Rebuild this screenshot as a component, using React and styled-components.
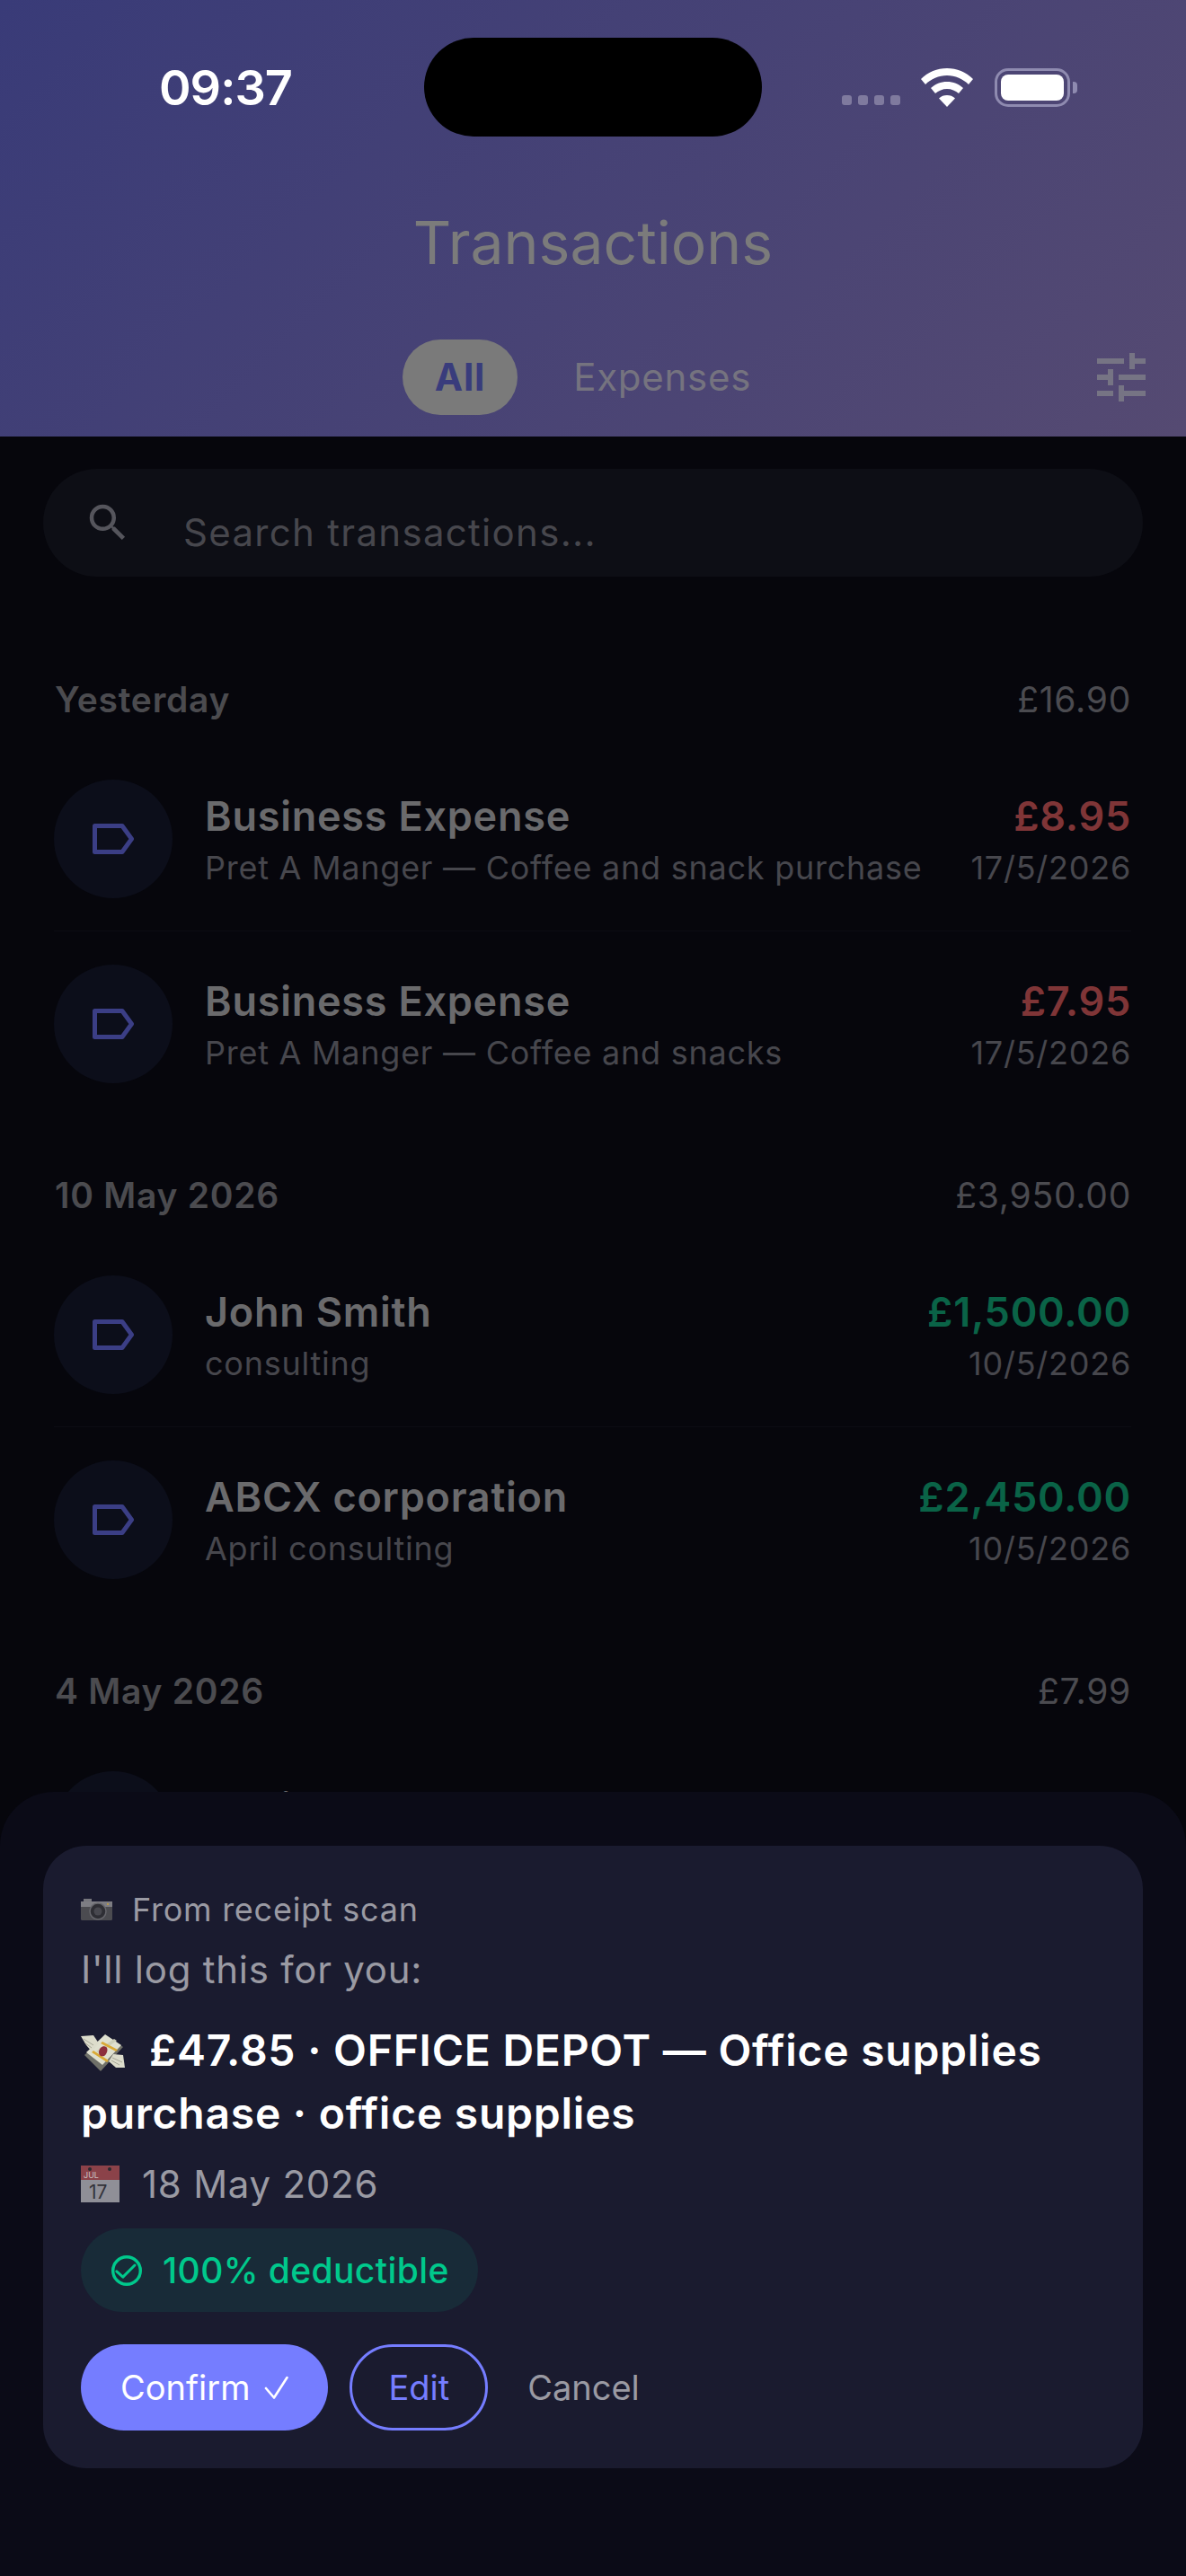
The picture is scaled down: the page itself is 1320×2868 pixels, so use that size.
import React from "react";
import styled, { createGlobalStyle } from "styled-components";
import { MdSearch, MdTune } from "react-icons/md";

const GlobalStyle = createGlobalStyle`
  html, body {
    margin: 0;
    padding: 0;
    background: #06060c;
  }
  * {
    box-sizing: border-box;
  }
  body {
    font-family: Inter, "Liberation Sans", sans-serif;
    letter-spacing: 0.75px;
  }
`;

const Page = styled.div`
  position: relative;
  width: 1320px;
  height: 2868px;
  overflow: hidden;
  background: #06060c;
`;

const Header = styled.header`
  height: 486px;
  padding-top: 42px;
  background: linear-gradient(135deg, #393b78 0%, #554a72 100%);
`;

const StatusBar = styled.div`
  display: grid;
  grid-template-columns: 472px 376px 1fr;
  height: 110px;
  align-items: center;
`;

const Time = styled.div`
  padding-left: 177px;
  font-size: 54px;
  font-weight: 600;
  letter-spacing: -1px;
  color: #fff;
`;

const Island = styled.div`
  height: 110px;
  border-radius: 55px;
  background: #000;
`;

const StatusIcons = styled.div`
  display: flex;
  align-items: flex-end;
  height: 44px;
  padding-left: 89px;
`;

const Dots = styled.div`
  display: flex;
  gap: 7px;
  margin: 0 23px 2px 0;
`;

const Dot = styled.span`
  width: 11px;
  height: 11px;
  border-radius: 3px;
  background: #7f7a9e;
`;

const Battery = styled.div`
  position: relative;
  width: 84px;
  height: 43px;
  margin-left: 24px;
  padding: 4px;
  border: 3px solid #8f8bb0;
  border-radius: 15px;
`;

const BatteryFill = styled.div`
  height: 100%;
  border-radius: 8px;
  background: #fff;
`;

const BatteryCap = styled.div`
  position: absolute;
  top: 12px;
  right: -11px;
  width: 5px;
  height: 13px;
  border-radius: 0 4px 4px 0;
  background: #8f8bb0;
`;

const Title = styled.h1`
  margin: 78px 0 0;
  font-size: 66px;
  line-height: 80px;
  font-weight: 400;
  letter-spacing: 0;
  text-align: center;
  color: #7b7b7b;
`;

const TabRow = styled.div`
  display: grid;
  grid-template-columns: 1fr auto 1fr;
  align-items: center;
  height: 84px;
  margin-top: 68px;
  padding: 0 36px;
`;

const Tabs = styled.div`
  grid-column: 2;
  display: flex;
  gap: 26px;
`;

const Tab = styled.div`
  height: 84px;
  padding: 0 36px;
  border-radius: 42px;
  font-size: 42px;
  line-height: 84px;
  font-weight: ${(p) => (p.$active ? 700 : 400)};
  color: ${(p) => (p.$active ? "#393c7c" : "#75737f")};
  background: ${(p) => (p.$active ? "#7a7a7a" : "transparent")};
`;

const FilterIcon = styled(MdTune)`
  justify-self: end;
  width: 72px;
  height: 72px;
  color: #767484;
`;

const Search = styled.div`
  display: flex;
  align-items: center;
  height: 120px;
  margin: 36px 48px 0;
  padding-left: 45px;
  border-radius: 60px;
  background: #0d0e15;
`;

const SearchIcon = styled(MdSearch)`
  width: 54px;
  height: 54px;
  color: #55555c;
`;

const SearchText = styled.span`
  margin: 20px 0 0 57px;
  font-size: 42px;
  letter-spacing: 1.3px;
  color: #47474d;
`;

const List = styled.div`
  padding: 109px 61px 0 60px;
`;

const Section = styled.section`
  margin-bottom: 60px;
`;

const SectionHead = styled.div`
  display: flex;
  justify-content: space-between;
  align-items: center;
  height: 54px;
  margin-bottom: 26px;
  padding-left: 1px;
`;

const SectionTitle = styled.span`
  font-size: 39px;
  font-weight: 600;
  color: #4b4b4f;
`;

const SectionTotal = styled.span`
  font-size: 39px;
  color: #4b4b50;
`;

const Row = styled.div`
  display: flex;
  align-items: center;
  gap: 36px;
  height: 206px;
  border-bottom: 1px solid ${(p) => (p.$last ? "transparent" : "#0c0c13")};
`;

const Avatar = styled.div`
  display: flex;
  flex: none;
  align-items: center;
  justify-content: center;
  width: 132px;
  height: 132px;
  border-radius: 50%;
  background: #0c0e1a;
`;

const RowBody = styled.div`
  flex: 1;
  min-width: 0;
  padding-top: 4px;
`;

const RowLine = styled.div`
  display: flex;
  justify-content: space-between;
  align-items: center;
  height: ${(p) => p.$h}px;
`;

const Name = styled.span`
  font-size: 45px;
  font-weight: 600;
  color: #6a6a6c;
`;

const Amount = styled.span`
  font-size: 45px;
  font-weight: 600;
  color: ${(p) => (p.$income ? "#0a6347" : "#7f3537")};
`;

const Sub = styled.span`
  font-size: 36px;
  color: #47474d;
`;

const Sheet = styled.div`
  position: absolute;
  left: 0;
  right: 0;
  bottom: 0;
  height: 873px;
  padding: 60px 48px 0;
  border-radius: 60px 60px 0 0;
  background: #0b0b17;
`;

const Card = styled.div`
  height: 693px;
  padding: 42px;
  border-radius: 48px;
  background: #1a1b2f;
`;

const Source = styled.div`
  display: flex;
  align-items: center;
  gap: 22px;
  height: 58px;
  font-size: 36px;
  color: #9a9aa3;
`;

const Intro = styled.div`
  margin-top: 8px;
  font-size: 42px;
  line-height: 60px;
  color: #9a9aa3;
`;

const Summary = styled.div`
  margin-top: 25px;
  font-size: 48px;
  line-height: 70px;
  font-weight: 600;
  color: #fff;
`;

const EmojiGap = styled.span`
  display: inline-block;
  width: 27px;
`;

const DateLine = styled.div`
  display: flex;
  align-items: center;
  gap: 25px;
  height: 62px;
  margin-top: 12px;
  font-size: 42px;
  color: #9a9aa3;
`;

const Deductible = styled.div`
  display: inline-flex;
  align-items: center;
  gap: 23px;
  height: 93px;
  margin-top: 19px;
  padding: 0 32px 0 34px;
  border-radius: 47px;
  font-size: 39px;
  font-weight: 500;
  letter-spacing: 0.4px;
  color: #00c98c;
  background: #182b38;
`;

const Actions = styled.div`
  display: flex;
  align-items: center;
  gap: 24px;
  margin-top: 36px;
`;

const Button = styled.div`
  display: flex;
  align-items: center;
  gap: 16px;
  height: 96px;
  padding: 0 ${(p) => (p.$plain ? 20 : p.$outline ? 40 : 44)}px;
  border: ${(p) => (p.$outline ? "3px solid #757dff" : "none")};
  border-radius: 48px;
  font-size: 38px;
  letter-spacing: 0;
  color: ${(p) => (p.$outline ? "#757dff" : p.$plain ? "#9a9aa3" : "#fff")};
  background: ${(p) => (p.$outline || p.$plain ? "transparent" : "#757dff")};
`;

const MoneySvg = styled.svg`
  vertical-align: -7px;
`;

const Wifi = () => (
  <svg width="58" height="43" viewBox="0 0 58 43">
    <path fill="#fff" d="M29 0c11 0 21 4 29 12l-5 6C47 12 38 8 29 8S11 12 5 18l-5-6C8 4 18 0 29 0z" />
    <path fill="#fff" d="M29 15c7 0 13 2.500 18 7l-5 6c-3.500-3-8-5-13-5s-9.500 2-13 5l-5-6c5-4.500 11-7 18-7z" />
    <path fill="#fff" d="M29 30c3.500 0 6.500 1 9 3.500L29 43l-9-9.500c2.500-2.500 5.500-3.500 9-3.500z" />
  </svg>
);

const TagIcon = () => (
  <svg width="46" height="34" viewBox="0 0 46 34" fill="none">
    <path d="M2.500 2.500H33L43.500 17 33 31.500H2.500z" stroke="#3b3e85" strokeWidth="5" strokeLinejoin="round" />
  </svg>
);

const CheckCircle = () => (
  <svg width="34" height="34" viewBox="0 0 34 34" fill="none" stroke="#00c98c" strokeLinecap="round" strokeLinejoin="round">
    <circle cx="17" cy="17" r="15.3" strokeWidth="3.400" />
    <path d="M5.800 17.800l7 6.300L26 11" strokeWidth="3" />
  </svg>
);

const ConfirmCheck = () => (
  <svg width="27" height="26" viewBox="0 0 27 26" fill="none" stroke="#fff" strokeLinecap="round" strokeLinejoin="round" strokeWidth="2.600" role="img" aria-label="check">
    <path d="M2 14l9 10.500L25.500 2" />
  </svg>
);

const CameraEmoji = () => (
  <svg width="35" height="24" viewBox="0 0 35 24">
    <rect x="0" y="3" width="35" height="21" rx="1.500" fill="#4b4b50" />
    <rect x="3" y="0" width="9" height="4" fill="#77777d" />
    <rect x="0" y="3" width="35" height="6" fill="#7d7d83" />
    <circle cx="19" cy="14" r="9" fill="#2e2e34" stroke="#66666c" strokeWidth="1.500" />
    <circle cx="19" cy="14" r="4.500" fill="#48484f" />
    <circle cx="30" cy="6" r="1" fill="#c9a13b" />
  </svg>
);

const MoneyEmoji = () => (
  <MoneySvg width="49" height="42" viewBox="0 0 49 42">
    <path d="M4 23L27 1l20 13-25 27z" fill="#6f7068" />
    <path d="M6 20L27 0l18 12-21 22z" fill="#dfe0cf" />
    <path d="M17 19l20-14 3 2L20 21z" fill="#cdcfb9" />
    <path d="M12 20l17 11 2-2-17-11zM22 10l17 9 2-2-17-9z" fill="#d9a936" />
    <path d="M20 20c0-5 5-8 8-6 3 2 1 8-2 10-3 1-6 0-6-4z" fill="#8d2f3c" />
    <path d="M0 2l14-1 6 9-8 9-6-7z" fill="#dcdccb" />
    <path d="M31 30l5-8 11 1 2 14-10 0z" fill="#dcdccb" />
    <path d="M3 5l11 7M4 9l8 6M35 26l11 5M34 29l9 5" stroke="#a8a897" strokeWidth="1" />
  </MoneySvg>
);

const CalendarEmoji = () => (
  <svg width="43" height="41" viewBox="0 0 43 41">
    <rect width="43" height="41" fill="#8f8f97" />
    <rect width="43" height="16" fill="#8b4249" />
    <circle cx="10" cy="4" r="2" fill="#2a2a30" />
    <circle cx="32" cy="4" r="2" fill="#2a2a30" />
    <text x="3" y="14" fontSize="9" letterSpacing="0" fill="#c9c0c4" fontFamily="Inter">JUL</text>
    <text x="9" y="37" fontSize="21" letterSpacing="0" fill="#33333a" fontFamily="Inter">17</text>
  </svg>
);

const groups = [
  {
    title: "Yesterday",
    total: "£16.90",
    rows: [
      { name: "Business Expense", sub: "Pret A Manger — Coffee and snack purchase", amount: "£8.95", date: "17/5/2026" },
      { name: "Business Expense", sub: "Pret A Manger — Coffee and snacks", amount: "£7.95", date: "17/5/2026" },
    ],
  },
  {
    title: "10 May 2026",
    total: "£3,950.00",
    rows: [
      { name: "John Smith", sub: "consulting", amount: "£1,500.00", date: "10/5/2026", income: true },
      { name: "ABCX corporation", sub: "April consulting", amount: "£2,450.00", date: "10/5/2026", income: true },
    ],
  },
  {
    title: "4 May 2026",
    total: "£7.99",
    rows: [{ name: "Business Expense", sub: "Monthly subscription", amount: "£7.99", date: "4/5/2026" }],
  },
];

const App = () => (
  <Page>
    <GlobalStyle />
    <Header>
      <StatusBar>
        <Time>09:37</Time>
        <Island />
        <StatusIcons>
          <Dots>
            <Dot />
            <Dot />
            <Dot />
            <Dot />
          </Dots>
          <Wifi />
          <Battery>
            <BatteryFill />
            <BatteryCap />
          </Battery>
        </StatusIcons>
      </StatusBar>
      <Title>Transactions</Title>
      <TabRow>
        <Tabs>
          <Tab $active>All</Tab>
          <Tab>Expenses</Tab>
        </Tabs>
        <FilterIcon />
      </TabRow>
    </Header>

    <Search>
      <SearchIcon />
      <SearchText>Search transactions...</SearchText>
    </Search>

    <List>
      {groups.map((group) => (
        <Section key={group.title}>
          <SectionHead>
            <SectionTitle>{group.title}</SectionTitle>
            <SectionTotal>{group.total}</SectionTotal>
          </SectionHead>
          {group.rows.map((row, i) => (
            <Row key={row.sub} $last={i === group.rows.length - 1}>
              <Avatar>
                <TagIcon />
              </Avatar>
              <RowBody>
                <RowLine $h={60}>
                  <Name>{row.name}</Name>
                  <Amount $income={row.income}>{row.amount}</Amount>
                </RowLine>
                <RowLine $h={54}>
                  <Sub>{row.sub}</Sub>
                  <Sub>{row.date}</Sub>
                </RowLine>
              </RowBody>
            </Row>
          ))}
        </Section>
      ))}
    </List>

    <Sheet>
      <Card>
        <Source>
          <CameraEmoji />
          From receipt scan
        </Source>
        <Intro>I'll log this for you:</Intro>
        <Summary>
          <MoneyEmoji />
          <EmojiGap />£47.85 · OFFICE DEPOT — Office supplies purchase · office supplies
        </Summary>
        <DateLine>
          <CalendarEmoji />
          18 May 2026
        </DateLine>
        <Deductible>
          <CheckCircle />
          100% deductible
        </Deductible>
        <Actions>
          <Button>
            Confirm
            <ConfirmCheck />
          </Button>
          <Button $outline>Edit</Button>
          <Button $plain>Cancel</Button>
        </Actions>
      </Card>
    </Sheet>
  </Page>
);

export default App;
